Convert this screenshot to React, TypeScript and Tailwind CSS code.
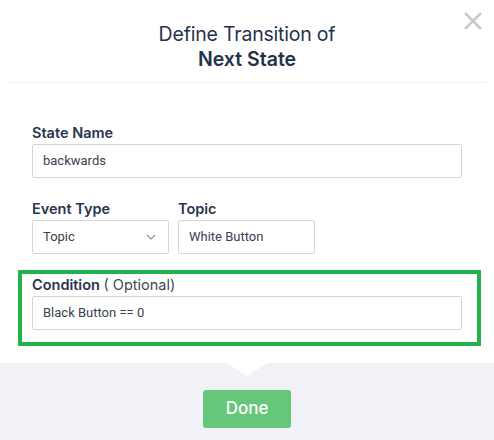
import React from "react";

export default function App() {
  const label = "text-[14.5px] font-semibold text-[#28344d] leading-[20px]";
  const input =
    "h-[34px] border border-[#d6d6d6] rounded-[2px] bg-white flex items-center px-[10px] text-[13px] text-[#3a4150]";
  return (
    <div
      className="w-[494px] h-[440px] bg-white relative overflow-hidden flex flex-col"
      style={{ fontFamily: "Inter, 'Noto Sans', sans-serif" }}
    >
      <div className="h-[83px] mx-[7px] border-b border-[#eef0f5] flex flex-col items-center pt-[22px]">
        <div className="text-[19.5px] leading-[25px] text-[#26324b] tracking-[-0.2px]">Define Transition of</div>
        <div className="text-[19.5px] leading-[25px] font-semibold text-[#26324b]">Next State</div>
      </div>
      <button className="absolute right-[11px] top-[11px] w-[20px] h-[20px] flex items-center justify-center">
        <svg width="18" height="18" viewBox="0 0 18 18">
          <path d="M2 2 L16 16 M16 2 L2 16" stroke="#c9c9c9" strokeWidth="2.6" strokeLinecap="square" />
        </svg>
      </button>

      <div className="px-[32px] pt-[40px] flex flex-col">
        <div className={label + " mb-[1px]"}>State Name</div>
        <div className={input + " w-[430px]"} style={{ fontFamily: "Roboto, sans-serif" }}>backwards</div>

        <div className="flex gap-[9px] mt-[21px]">
          <div className="flex flex-col">
            <div className={label + " mb-[1px]"}>Event Type</div>
            <div className={input + " w-[137px] justify-between pr-[12px]"} style={{ fontFamily: "Roboto, sans-serif" }}>
              <span>Topic</span>
              <svg width="10" height="6" viewBox="0 0 10 6">
                <path d="M1 1 L5 5 L9 1" stroke="#8a8f99" strokeWidth="1.1" fill="none" />
              </svg>
            </div>
          </div>
          <div className="flex flex-col">
            <div className={label + " mb-[1px]"}>Topic</div>
            <div className={input + " w-[137px]"} style={{ fontFamily: "Roboto, sans-serif" }}>White Button</div>
          </div>
        </div>

        <div className="ml-[-14px] mr-[-19px] mt-[16px] border-[4px] border-[#22b14c] pl-[10px] pr-[15px] pt-[1px] pb-[12px]">
          <div className={label + " mb-[1px]"}>
            Condition <span className="font-normal text-[#3f4757]">( Optional)</span>
          </div>
          <div className={input + " w-[430px]"} style={{ fontFamily: "Roboto, sans-serif" }}>Black Button == 0</div>
        </div>
      </div>

      <div className="mt-[17px] flex-1 bg-[#f0f2f7] relative flex justify-center pt-[27px]">
        <div className="absolute left-[227px] top-0 w-0 h-0 border-l-[20px] border-r-[20px] border-t-[13px] border-l-transparent border-r-transparent border-t-white" />
        <button className="w-[88px] h-[38px] bg-[#66c77a] rounded-[3px] text-white text-[17px] font-medium" style={{ fontFamily: "Inter, sans-serif" }}>
          Done
        </button>
      </div>
    </div>
  );
}
